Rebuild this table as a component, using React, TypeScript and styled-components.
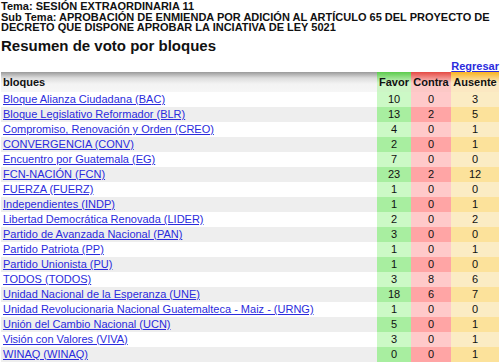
import React from "react";
import styled, { createGlobalStyle } from "styled-components";

const GlobalStyle = createGlobalStyle`
  html, body {
    margin: 0;
    padding: 0;
    background: #ffffff;
    font-family: "Liberation Sans", Arial, sans-serif;
    color: #111;
  }
`;

const Page = styled.div`
  width: 500px;
  padding: 1px 1px 0 1px;
  box-sizing: border-box;
`;

const Topic = styled.div`
  font-size: 11px;
  line-height: 10.5px;
  font-weight: bold;
`;

const Title = styled.h2`
  margin: 4px 0 0 0;
  font-size: 15px;
  line-height: 18px;
  font-weight: bold;
`;

const BackRow = styled.div`
  display: flex;
  justify-content: flex-end;
  align-items: flex-start;
  margin-top: 4px;
  height: 13px;
  font-size: 11px;
  line-height: 14px;
`;

const BackLink = styled.a`
  color: #2b2bdd;
  font-weight: bold;
  text-decoration: underline;
`;

const Table = styled.table`
  width: 498px;
  border-collapse: collapse;
  font-size: 11px;
`;

type Tone = "favor" | "contra" | "ausente";

const headColors: Record<Tone, [string, string]> = {
  favor: ["#5ccb4c", "#cdf5c6"],
  contra: ["#e44a44", "#fcc8c6"],
  ausente: ["#f9b420", "#fbe8c2"],
};

const bodyColors: Record<Tone, [string, string]> = {
  favor: ["#ccf9c6", "#a8eea0"],
  contra: ["#ffcaca", "#ffa5a5"],
  ausente: ["#fbecc4", "#fce29b"],
};

const NameHead = styled.th`
  height: 20px;
  padding: 0 2px;
  text-align: left;
  font-weight: bold;
  background: linear-gradient(#9a9a9a 0px, #dcdcdc 6px, #f3f3f3 12px, #f6f6f6);
`;

const VoteHead = styled.th<{ $tone: Tone }>`
  height: 20px;
  padding: 0 2px;
  text-align: center;
  font-weight: bold;
  background: ${(p) =>
    `linear-gradient(${headColors[p.$tone][0]} 0px, ${headColors[p.$tone][1]} 11px, ${headColors[p.$tone][1]})`};
`;

const NameCell = styled.td<{ $alt: boolean }>`
  height: 15px;
  padding: 0 2px;
  background: ${(p) => (p.$alt ? "#eeeeee" : "#ffffff")};
`;

const VoteCell = styled.td<{ $tone: Tone; $alt: boolean }>`
  height: 15px;
  padding: 0;
  text-align: center;
  background: ${(p) => bodyColors[p.$tone][p.$alt ? 1 : 0]};
`;

const PartyLink = styled.a`
  color: #2b2bdd;
  text-decoration: underline;
  white-space: nowrap;
`;

const rows: [string, number, number, number][] = [
  ["Bloque Alianza Ciudadana (BAC)", 10, 0, 3],
  ["Bloque Legislativo Reformador (BLR)", 13, 2, 5],
  ["Compromiso, Renovación y Orden (CREO)", 4, 0, 1],
  ["CONVERGENCIA (CONV)", 2, 0, 1],
  ["Encuentro por Guatemala (EG)", 7, 0, 0],
  ["FCN-NACIÓN (FCN)", 23, 2, 12],
  ["FUERZA (FUERZ)", 1, 0, 0],
  ["Independientes (INDP)", 1, 0, 1],
  ["Libertad Democrática Renovada (LIDER)", 2, 0, 2],
  ["Partido de Avanzada Nacional (PAN)", 3, 0, 0],
  ["Partido Patriota (PP)", 1, 0, 1],
  ["Partido Unionista (PU)", 1, 0, 0],
  ["TODOS (TODOS)", 3, 8, 6],
  ["Unidad Nacional de la Esperanza (UNE)", 18, 6, 7],
  ["Unidad Revolucionaria Nacional Guatemalteca - Maiz - (URNG)", 1, 0, 0],
  ["Unión del Cambio Nacional (UCN)", 5, 0, 1],
  ["Visión con Valores (VIVA)", 3, 0, 1],
  ["WINAQ (WINAQ)", 0, 0, 1],
];

const App = () => {
  return (
    <>
      <GlobalStyle />
      <Page>
        <Topic>Tema: SESIÓN EXTRAORDINARIA 11</Topic>
        <Topic>
          Sub Tema: APROBACIÓN DE ENMIENDA POR ADICIÓN AL ARTÍCULO 65 DEL PROYECTO DE
          DECRETO QUE DISPONE APROBAR LA INCIATIVA DE LEY 5021
        </Topic>
        <Title>Resumen de voto por bloques</Title>
        <BackRow>
          <BackLink href="#">Regresar</BackLink>
        </BackRow>
        <Table>
          <colgroup>
            <col />
            <col style={{ width: 33 }} />
            <col style={{ width: 40 }} />
            <col style={{ width: 48 }} />
          </colgroup>
          <thead>
            <tr>
              <NameHead>bloques</NameHead>
              <VoteHead $tone="favor">Favor</VoteHead>
              <VoteHead $tone="contra">Contra</VoteHead>
              <VoteHead $tone="ausente">Ausente</VoteHead>
            </tr>
          </thead>
          <tbody>
            {rows.map(([name, favor, contra, ausente], i) => {
              const alt = i % 2 === 1;
              return (
                <tr key={name}>
                  <NameCell $alt={alt}>
                    <PartyLink href="#">{name}</PartyLink>
                  </NameCell>
                  <VoteCell $tone="favor" $alt={alt}>{favor}</VoteCell>
                  <VoteCell $tone="contra" $alt={alt}>{contra}</VoteCell>
                  <VoteCell $tone="ausente" $alt={alt}>{ausente}</VoteCell>
                </tr>
              );
            })}
          </tbody>
        </Table>
      </Page>
    </>
  );
};

export default App;
